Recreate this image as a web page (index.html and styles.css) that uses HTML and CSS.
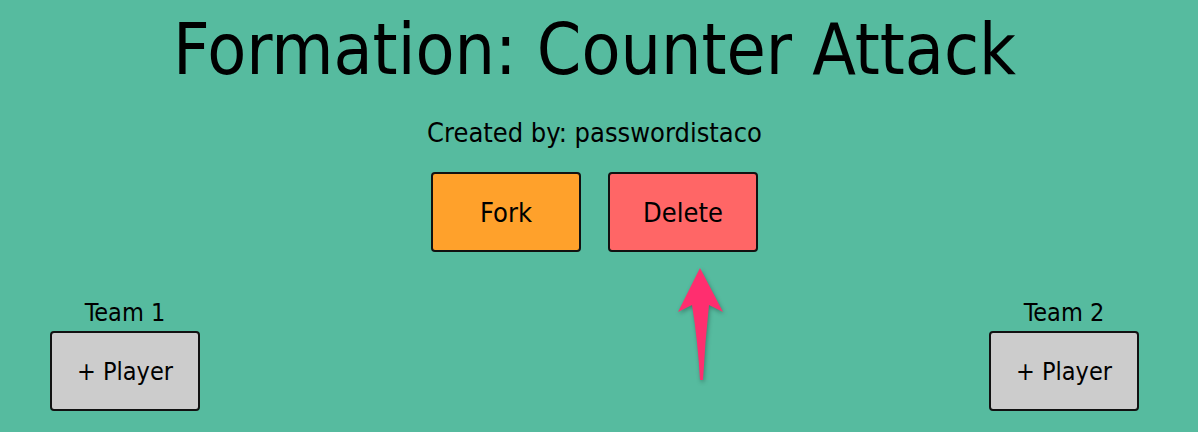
FILE: index.html
```html
<!DOCTYPE html>
<html>
<head>
<meta charset="utf-8">
<link rel="stylesheet" href="styles.css">
</head>
<body>
<div class="page">
  <header class="head">
    <h1 class="title">Formation: Counter Attack</h1>
    <p class="creator">Created by: passwordistaco</p>
    <div class="actions">
      <button class="btn btn-fork">Fork</button>
      <button class="btn btn-delete">Delete</button>
    </div>
  </header>
  <section class="teams">
    <div class="team">
      <div class="team-name">Team 1</div>
      <button class="btn btn-player">+ Player</button>
    </div>
    <div class="team">
      <div class="team-name">Team 2</div>
      <button class="btn btn-player">+ Player</button>
    </div>
  </section>
  <svg class="arrow" width="60" height="124" viewBox="0 0 60 124">
    <path d="M30 6 L53 50 L39 43 Q35 80 33 118 L30 118 Q28 80 22 43 L8 50 Z" fill="#ff2e6f"/>
  </svg>
</div>
</body>
</html>
```
FILE: styles.css
```css
html, body {
  margin: 0;
  padding: 0;
  background: #56bb9f;
}
body {
  width: 1198px;
  height: 432px;
  overflow: hidden;
  font-family: "DejaVu Sans Condensed", "Liberation Sans", sans-serif;
  color: #000;
}
.page {
  position: relative;
  width: 1189px;
  height: 432px;
}
.head {
  display: flex;
  flex-direction: column;
  align-items: center;
  padding-top: 10px;
}
.title {
  margin: 0;
  font-weight: normal;
  font-size: 71px;
  line-height: 80px;
}
.creator {
  margin: 28px 0 0;
  font-size: 27px;
  line-height: 30px;
}
.actions {
  display: flex;
  gap: 27px;
  margin-top: 24px;
}
.btn {
  width: 150px;
  height: 80px;
  border: 2px solid #111;
  border-radius: 4px;
  font-family: inherit;
  font-size: 27px;
  color: #000;
  padding: 0;
}
.btn-fork { background: #ffa12b; }
.btn-delete { background: #ff6666; }
.btn-player { background: #cccccc; font-size: 25px; }
.teams {
  display: flex;
  justify-content: space-between;
  padding: 0 50px;
  margin-top: 47px;
}
.team {
  display: flex;
  flex-direction: column;
  align-items: center;
  gap: 4px;
}
.team-name {
  font-size: 25px;
  line-height: 28px;
}
.arrow {
  position: absolute;
  left: 670px;
  top: 262px;
  filter: drop-shadow(1px 2px 2px rgba(0,0,0,0.3));
}
```
